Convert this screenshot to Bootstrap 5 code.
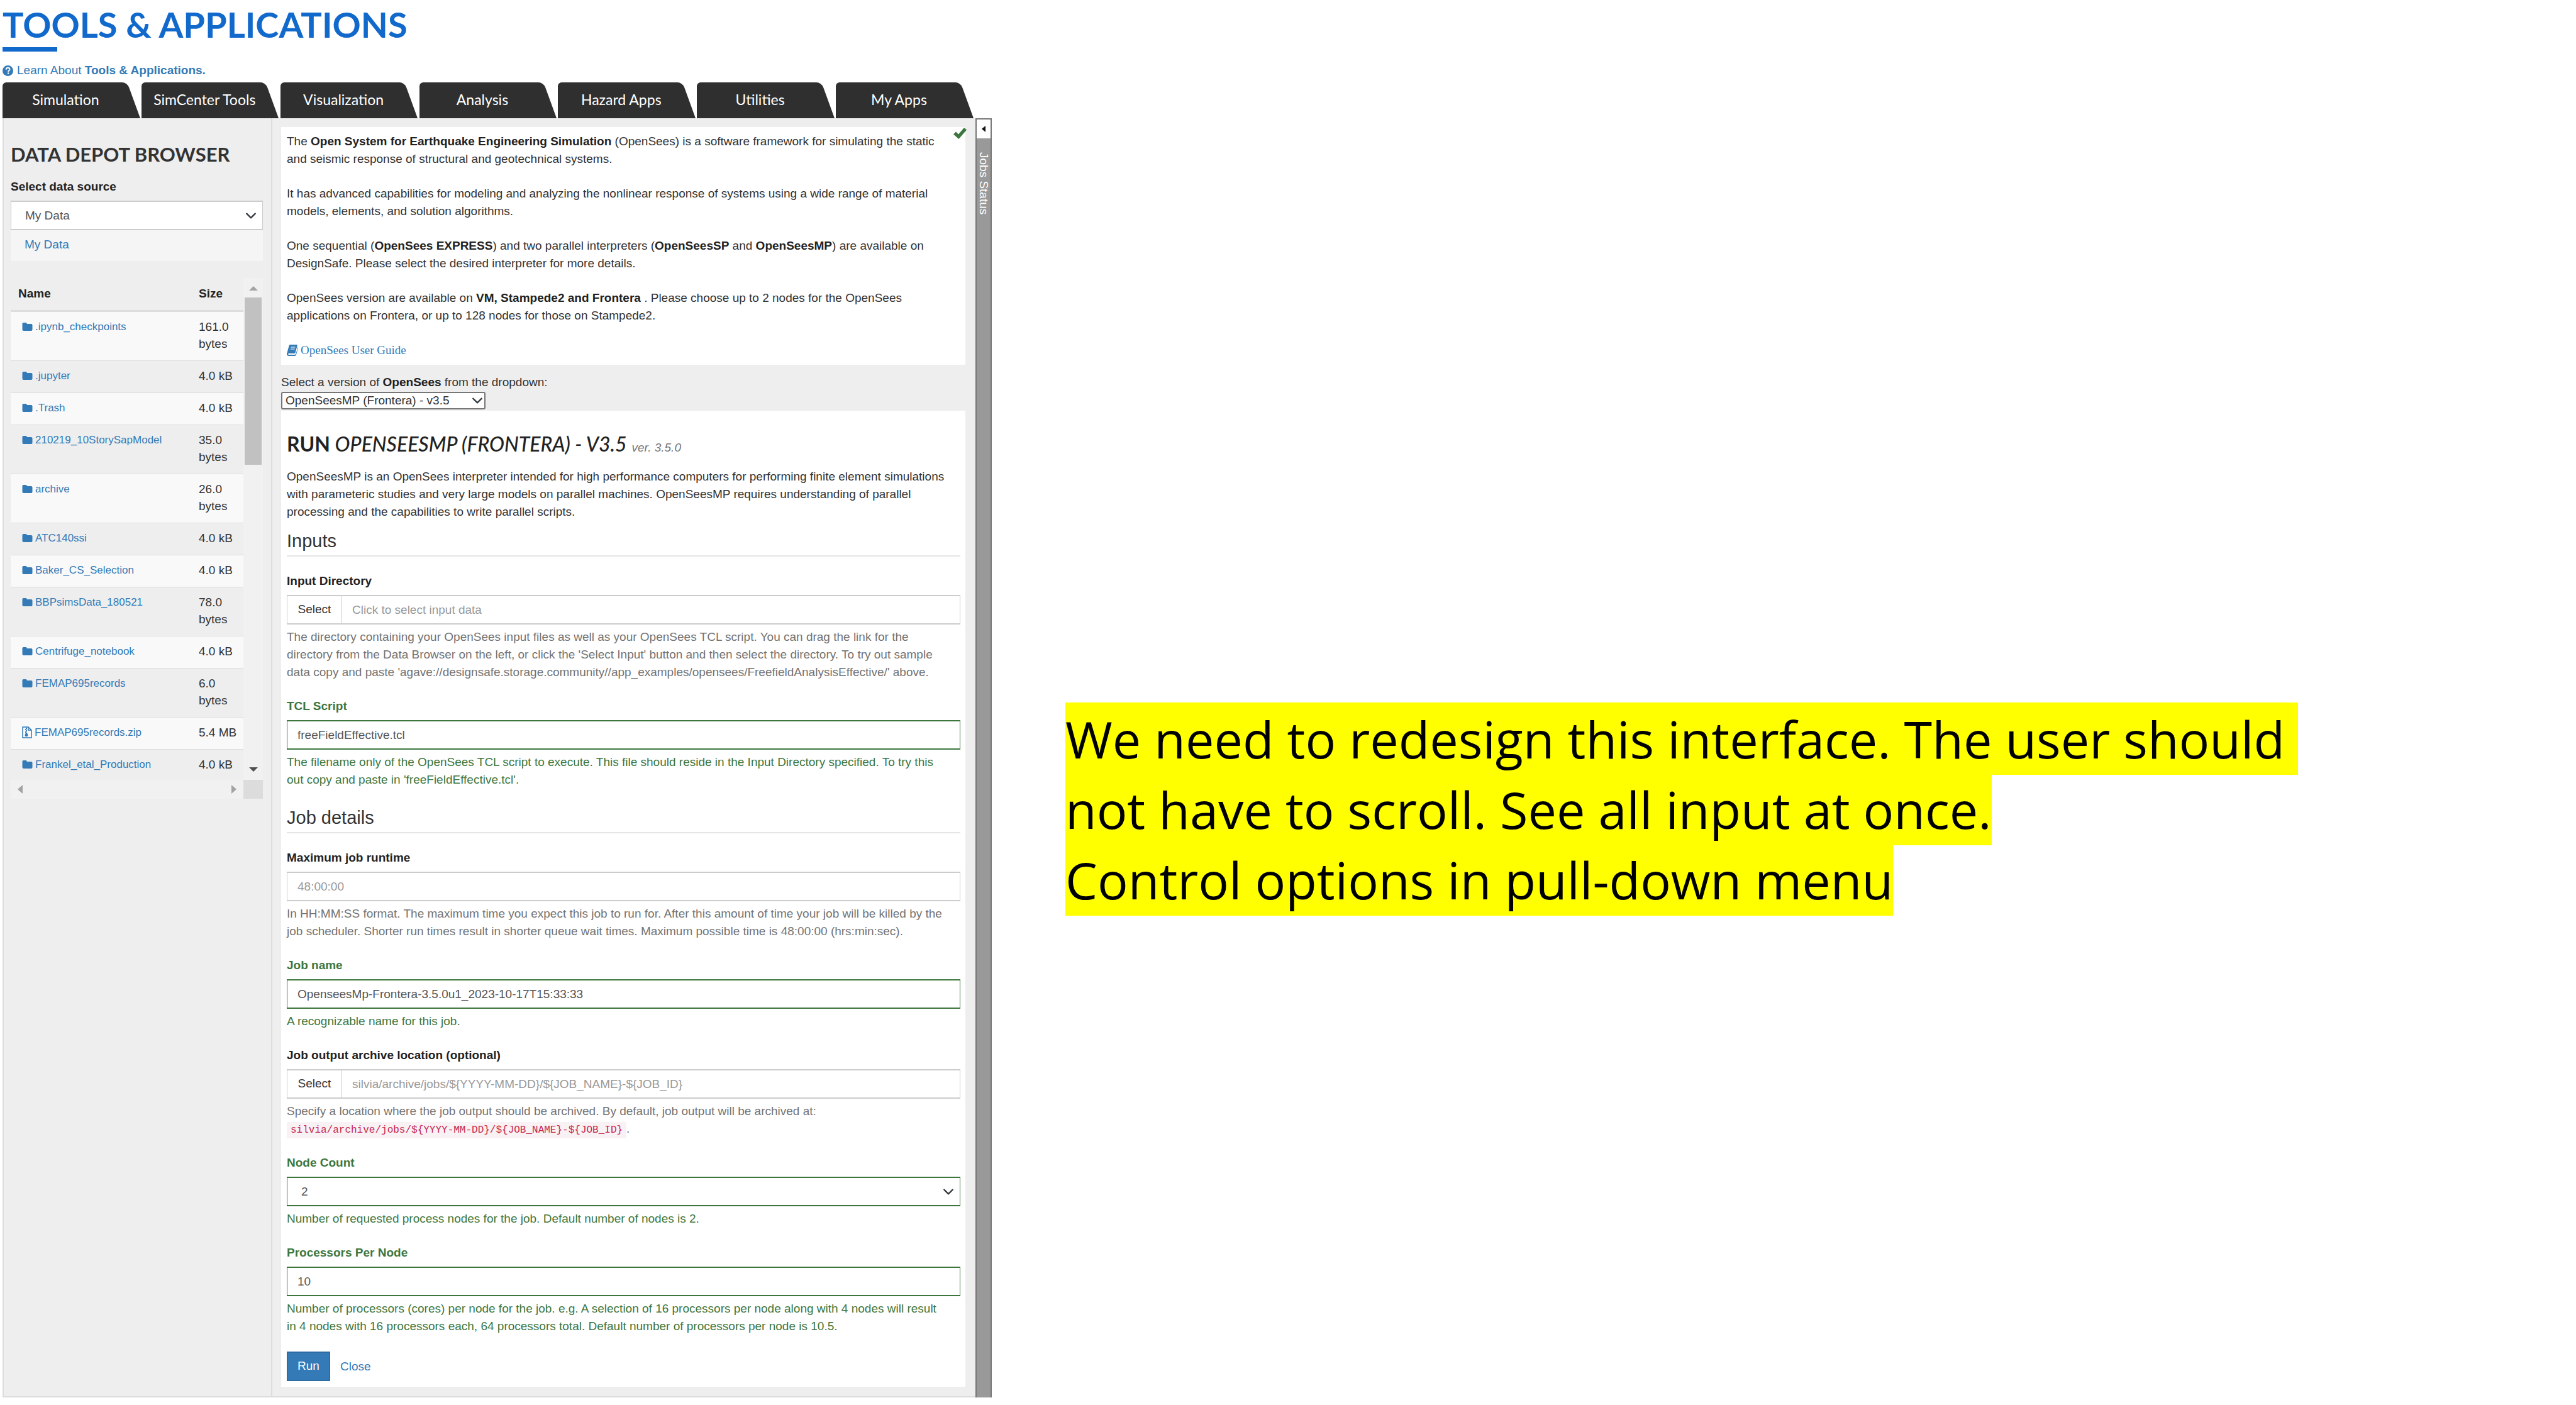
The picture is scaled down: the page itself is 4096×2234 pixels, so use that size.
<!DOCTYPE html>
<html lang="en">
<head>
<meta charset="utf-8">
<meta name="viewport" content="width=device-width, initial-scale=1">
<title>Tools &amp; Applications</title>
<link href="https://cdn.jsdelivr.net/npm/bootstrap@5.3.0/dist/css/bootstrap.min.css" rel="stylesheet">
<style>
  body { font-family: "Liberation Sans", Arial, sans-serif; font-size: 19px; line-height: 28px; color: #333; background: #fff; }
  a { color: #337ab7; text-decoration: none; }
  strong, label { font-weight: 700; }
  strong { color: #222; }
  a strong { color: inherit; }
  .app { width: 38.5%; }
  .display-face { font-family: Lato, sans-serif; font-weight: 700; }

  .page-title { font-size: 56px; line-height: 64px; color: #1169cc; margin: 7px 0 4px; }
  .title-bar { width: 87px; height: 7px; background: #1169cc; margin-bottom: 16px; }
  .learn { margin-bottom: 5px; gap: 6px; }

  .tool-tabs { gap: 2px; padding-right: 29px; }
  .tool-tab { flex: 1 1 0; height: 57px; position: relative; isolation: isolate; color: #fff; font-size: 23px; line-height: 28px; border: 0; background: none; padding: 0 18px 3px 0; white-space: nowrap; overflow: hidden; }
  .tool-tab::before, .tool-tab::after { content: ""; position: absolute; top: 0; bottom: 0; z-index: -1; background: #2f2f2f; }
  .tool-tab::before { left: 0; width: 60%; border-top-left-radius: 6px; }
  .tool-tab::after { right: 0; width: 60%; border-top-right-radius: 8px; transform: skewX(20deg); transform-origin: bottom right; }

  .workspace { background: #eee; border-left: 2px solid #ddd; border-bottom: 2px solid #ddd; }
  .depot { width: 427px; border-right: 2px solid #ddd; padding: 37px 13px 0 11px; }
  .depot-title { font-size: 31px; line-height: 40px; margin-bottom: 18px; }
  .field-label { display: block; margin-bottom: 8px; color: #222; }
  .field-box { height: 47px; border: solid #ccc; border-width: 2px 1px; border-radius: 0; font-size: 19px; line-height: 28px; color: #555; padding: 7px 16px; background-color: #fff; }
  .field-box::placeholder { color: #999; }
  .form-select.field-box { padding-left: 22px; background-position: right 9px center; background-size: 18px 18px; }
  .crumb { background: #f5f5f5; padding: 9px 22px 12px; margin-bottom: 27px; }

  .file-view { height: 798px; overflow: hidden; }
  .file-table { border-collapse: separate; border-spacing: 0; width: 100%; table-layout: fixed; }
  .file-table th { padding: 11px 12px 12px; border-bottom: 2px solid #ddd; color: #222; }
  .file-table td { padding: 10px 8px 13px 12px; border-top: 1px solid #ddd; line-height: 27px; vertical-align: top; }
  .file-table td:first-child { padding-left: 18px; font-size: 17px; }
  .file-table tbody tr:nth-child(odd) { background: #f9f9f9; }
  .size-col { width: 83px; }
  .file-ico { width: 17px; height: 13px; margin-right: 4px; vertical-align: -1px; }
  .zip-ico { width: 16px; height: 19px; margin-right: 4px; vertical-align: -4px; }
  .vbar { width: 31px; background: #f1f1f1; padding: 13px 0; }
  .vthumb { width: 27px; height: 266px; background: #c1c1c1; margin-top: 11px; }
  .hbar { height: 30px; background: #f1f1f1; padding: 0 11px; }
  .corner { width: 31px; height: 30px; background: #dcdcdc; }

  .tool-pane { padding: 14px 16px 15px 14px; min-width: 0; }
  .sheet { background: #fff; padding: 9px 8px 9px 9px; }
  .sheet p { margin-bottom: 27px; padding-right: 12px; }
  .run-form { padding-top: 31px; }
  .run-form p { margin-bottom: 12px; }
  .guide { font-family: "Liberation Serif", serif; }
  .ok-tick { position: absolute; right: -2px; top: 1px; }
  .version-line { margin-top: 14px; margin-bottom: 1px; font-weight: 400; }
  .version-pick { width: 325px; height: 28px; border: 2px solid #767676; border-radius: 3px; padding: 0 5px; font-size: 19px; line-height: 24px; color: #333; background-position: right 2px center; background-size: 18px 18px; margin-bottom: 2px; }
  .run-title { font-size: 32px; line-height: 44px; margin-bottom: 16px; color: #222; }
  .run-title em { font-weight: 500; }
  .run-title small { font-family: "Liberation Sans", sans-serif; font-size: 19px; line-height: 20px; font-weight: 400; font-style: italic; color: #777; }
  .part-title { font-size: 29px; line-height: 40px; font-weight: 400; color: #333; border-bottom: 2px solid #e5e5e5; padding-bottom: 3px; margin-bottom: 25px; }
  .help { color: #737373; margin-top: 6px; margin-bottom: 26px; padding-right: 20px; }
  .valid .field-label, .valid .help { color: #3c763d; }
  .valid .field-box { border-color: #3c763d; }
  .pick-btn { border: solid #ccc; border-width: 2px 0 2px 1px; background: #fff; color: #333; width: 87px; border-radius: 0; font-size: 19px; padding: 0; }
  .path-code { font-family: "Liberation Mono", monospace; font-size: 16px; line-height: 20px; color: #c7254e; background: #f9f2f4; padding: 4px 6px; }
  .run-btn { background: #337ab7; border: 2px solid #2e6da4; border-radius: 0; color: #fff; width: 69px; height: 47px; font-size: 19px; padding: 0; }
  .jobs { width: 26px; background: #999; border: 2px solid #777; border-width: 2px 2px 0; }
  .jobs button { height: 30px; width: 100%; background: #fff; border: 0; padding: 0; display: flex; align-items: center; justify-content: center; }
  .jobs span { writing-mode: vertical-rl; color: #fff; line-height: 22px; margin-top: 22px; }

  .note { padding: calc(50vh + 2px) 400px 0 117px; font-family: "Open Sans", sans-serif; font-size: 81px; line-height: 112px; color: #000; }
  .note mark { background: #ff0; color: #000; padding: 2px 0; }
</style>
<script src="https://cdn.jsdelivr.net/npm/bootstrap@5.3.0/dist/js/bootstrap.bundle.min.js"></script>
</head>
<body>
<div class="d-flex align-items-start">
  <div class="app flex-shrink-0">
    <header class="ps-1">
      <h1 class="page-title display-face">TOOLS &amp; APPLICATIONS</h1>
      <div class="title-bar"></div>
      <a href="#" class="learn d-flex align-items-center">
        <svg width="17" height="17" viewBox="0 0 16 16"><circle cx="8" cy="8" r="8" fill="#337ab7"/><path d="M5.300 6.200C5.400 4.400 6.600 3.600 8.100 3.600c1.500 0 2.700.9 2.700 2.300 0 1.900-2.200 1.900-2.200 3.500" fill="none" stroke="#fff" stroke-width="1.900"/><rect x="7.500" y="10.700" width="2.100" height="2.100" fill="#fff"/></svg>
        <span>Learn About <strong>Tools &amp; Applications.</strong></span>
      </a>
      <nav class="tool-tabs d-flex display-face">
        <button class="tool-tab">Simulation</button>
        <button class="tool-tab">SimCenter Tools</button>
        <button class="tool-tab">Visualization</button>
        <button class="tool-tab">Analysis</button>
        <button class="tool-tab">Hazard Apps</button>
        <button class="tool-tab">Utilities</button>
        <button class="tool-tab">My Apps</button>
      </nav>
    </header>

    <div class="d-flex">
      <main class="workspace d-flex flex-grow-1 ms-1">
        <aside class="depot flex-shrink-0">
          <h2 class="depot-title display-face">DATA DEPOT BROWSER</h2>
          <label class="field-label" for="source">Select data source</label>
          <select id="source" class="form-select field-box"><option>My Data</option></select>
          <div class="crumb"><a href="#">My Data</a></div>

          <div class="d-flex">
            <div class="file-view flex-grow-1">
              <table class="file-table">
                <thead><tr><th>Name</th><th class="size-col">Size</th></tr></thead>
                <tbody>
                  <tr><td><a href="#"><svg class="file-ico" viewBox="0 0 16 13"><use href="#folder"/></svg>.ipynb_checkpoints</a></td><td>161.0 bytes</td></tr>
                  <tr><td><a href="#"><svg class="file-ico" viewBox="0 0 16 13"><use href="#folder"/></svg>.jupyter</a></td><td>4.0 kB</td></tr>
                  <tr><td><a href="#"><svg class="file-ico" viewBox="0 0 16 13"><use href="#folder"/></svg>.Trash</a></td><td>4.0 kB</td></tr>
                  <tr><td><a href="#"><svg class="file-ico" viewBox="0 0 16 13"><use href="#folder"/></svg>210219_10StorySapModel</a></td><td>35.0 bytes</td></tr>
                  <tr><td><a href="#"><svg class="file-ico" viewBox="0 0 16 13"><use href="#folder"/></svg>archive</a></td><td>26.0 bytes</td></tr>
                  <tr><td><a href="#"><svg class="file-ico" viewBox="0 0 16 13"><use href="#folder"/></svg>ATC140ssi</a></td><td>4.0 kB</td></tr>
                  <tr><td><a href="#"><svg class="file-ico" viewBox="0 0 16 13"><use href="#folder"/></svg>Baker_CS_Selection</a></td><td>4.0 kB</td></tr>
                  <tr><td><a href="#"><svg class="file-ico" viewBox="0 0 16 13"><use href="#folder"/></svg>BBPsimsData_180521</a></td><td>78.0 bytes</td></tr>
                  <tr><td><a href="#"><svg class="file-ico" viewBox="0 0 16 13"><use href="#folder"/></svg>Centrifuge_notebook</a></td><td>4.0 kB</td></tr>
                  <tr><td><a href="#"><svg class="file-ico" viewBox="0 0 16 13"><use href="#folder"/></svg>FEMAP695records</a></td><td>6.0<br>bytes</td></tr>
                  <tr><td><a href="#"><svg class="zip-ico" viewBox="0 0 16 19"><path d="M1 1h9l5 5v12H1zM10 1v5h5" fill="none" stroke="#337ab7" stroke-width="1.500"/><path d="M6 2h2v2H6zM5 4h2v2H5zM6 6h2v2H6zM5 8h2v2H5zM6 10h2l1.500 4a2.500 2.300 0 1 1-5 0z" fill="#337ab7"/></svg>FEMAP695records.zip</a></td><td>5.4 MB</td></tr>
                  <tr><td><a href="#"><svg class="file-ico" viewBox="0 0 16 13"><use href="#folder"/></svg>Frankel_etal_Production</a></td><td>4.0 kB</td></tr>
                </tbody>
              </table>
            </div>
            <div class="vbar d-flex flex-column align-items-center flex-shrink-0" aria-hidden="true">
              <svg width="14" height="7" viewBox="0 0 14 7"><path d="M0 7 7 0l7 7z" fill="#a3a3a3"/></svg>
              <div class="vthumb"></div>
              <svg class="mt-auto" width="14" height="7" viewBox="0 0 14 7"><path d="M0 0h14L7 7z" fill="#505050"/></svg>
            </div>
          </div>
          <div class="d-flex" aria-hidden="true">
            <div class="hbar d-flex align-items-center justify-content-between flex-grow-1">
              <svg width="8" height="14" viewBox="0 0 8 14"><path d="M8 0v14L0 7z" fill="#a3a3a3"/></svg>
              <svg width="8" height="14" viewBox="0 0 8 14"><path d="M0 0v14l8-7z" fill="#a3a3a3"/></svg>
            </div>
            <div class="corner"></div>
          </div>
        </aside>

        <section class="tool-pane flex-grow-1">
          <div class="sheet position-relative">
            <svg class="ok-tick" width="21" height="18" viewBox="0 0 21 18"><path d="M0 10.500 4 6.500l4 4L17 0l4 3.500L8.500 18z" fill="#3c763d"/></svg>
            <p>The <strong>Open System for Earthquake Engineering Simulation</strong> (OpenSees) is a software framework for simulating the static and seismic response of structural and geotechnical systems.</p>
            <p>It has advanced capabilities for modeling and analyzing the nonlinear response of systems using a wide range of material models, elements, and solution algorithms.</p>
            <p>One sequential (<strong>OpenSees EXPRESS</strong>) and two parallel interpreters (<strong>OpenSeesSP</strong> and <strong>OpenSeesMP</strong>) are available on DesignSafe. Please select the desired interpreter for more details.</p>
            <p>OpenSees version are available on <strong>VM, Stampede2 and Frontera</strong> . Please choose up to 2 nodes for the OpenSees applications on Frontera, or up to 128 nodes for those on Stampede2.</p>
            <a href="#" class="guide d-flex align-items-center"><svg class="me-1" width="18" height="18" viewBox="0 0 18 18"><path d="M5 0h10.500c1 0 1.500.6 1.200 1.500L13.500 13c-.2.800-.8 1-1.500 1H3c-1 0-1.300 2 .2 2h9.500c1 0 1.600-.5 1.900-1.400L17.500 4c.6.400.6 1 .4 1.600L15 16c-.4 1.300-1.200 2-2.500 2H3c-2.200 0-3.400-2-2.800-4L3.500 2C3.800.8 4 0 5 0z" fill="#337ab7"/><path d="M6.500 4h7M5.800 7h7" stroke="#fff" stroke-width="1.200"/></svg>OpenSees User Guide</a>
          </div>
          <label class="version-line d-block" for="version">Select a version of <strong>OpenSees</strong> from the dropdown:</label>
          <select id="version" class="form-select version-pick"><option>OpenSeesMP (Frontera) - v3.5</option></select>

          <form class="sheet run-form">
            <h2 class="run-title display-face">RUN <em>OPENSEESMP (FRONTERA) - V3.5</em> <small>ver. 3.5.0</small></h2>
            <p>OpenSeesMP is an OpenSees interpreter intended for high performance computers for performing finite element simulations with parameteric studies and very large models on parallel machines. OpenSeesMP requires understanding of parallel processing and the capabilities to write parallel scripts.</p>

            <h3 class="part-title">Inputs</h3>
            <div>
              <label class="field-label" for="indir">Input Directory</label>
              <div class="d-flex"><button type="button" class="pick-btn btn flex-shrink-0">Select</button><input id="indir" class="form-control field-box" placeholder="Click to select input data"></div>
              <div class="help">The directory containing your OpenSees input files as well as your OpenSees TCL script. You can drag the link for the directory from the Data Browser on the left, or click the 'Select Input' button and then select the directory. To try out sample data copy and paste 'agave://designsafe.storage.community//app_examples/opensees/FreefieldAnalysisEffective/' above.</div>
            </div>
            <div class="valid">
              <label class="field-label" for="tcl">TCL Script</label>
              <input id="tcl" class="form-control field-box" value="freeFieldEffective.tcl">
              <div class="help">The filename only of the OpenSees TCL script to execute. This file should reside in the Input Directory specified. To try this out copy and paste in 'freeFieldEffective.tcl'.</div>
            </div>

            <h3 class="part-title">Job details</h3>
            <div>
              <label class="field-label" for="runtime">Maximum job runtime</label>
              <input id="runtime" class="form-control field-box" placeholder="48:00:00">
              <div class="help">In HH:MM:SS format. The maximum time you expect this job to run for. After this amount of time your job will be killed by the job scheduler. Shorter run times result in shorter queue wait times. Maximum possible time is 48:00:00 (hrs:min:sec).</div>
            </div>
            <div class="valid">
              <label class="field-label" for="jobname">Job name</label>
              <input id="jobname" class="form-control field-box" value="OpenseesMp-Frontera-3.5.0u1_2023-10-17T15:33:33">
              <div class="help">A recognizable name for this job.</div>
            </div>
            <div>
              <label class="field-label" for="outdir">Job output archive location (optional)</label>
              <div class="d-flex"><button type="button" class="pick-btn btn flex-shrink-0">Select</button><input id="outdir" class="form-control field-box" placeholder="silvia/archive/jobs/${YYYY-MM-DD}/${JOB_NAME}-${JOB_ID}"></div>
              <div class="help">Specify a location where the job output should be archived. By default, job output will be archived at: <code class="path-code">silvia/archive/jobs/${YYYY-MM-DD}/${JOB_NAME}-${JOB_ID}</code>.</div>
            </div>
            <div class="valid">
              <label class="field-label" for="nodes">Node Count</label>
              <select id="nodes" class="form-select field-box"><option>2</option></select>
              <div class="help">Number of requested process nodes for the job. Default number of nodes is 2.</div>
            </div>
            <div class="valid">
              <label class="field-label" for="procs">Processors Per Node</label>
              <input id="procs" class="form-control field-box" value="10">
              <div class="help">Number of processors (cores) per node for the job. e.g. A selection of 16 processors per node along with 4 nodes will result in 4 nodes with 16 processors each, 64 processors total. Default number of processors per node is 10.5.</div>
            </div>
            <div class="d-flex align-items-center gap-3">
              <button type="button" class="run-btn btn">Run</button>
              <a href="#">Close</a>
            </div>
          </form>
        </section>
      </main>
      <aside class="jobs flex-shrink-0">
        <button aria-label="Show jobs"><svg width="6" height="10" viewBox="0 0 6 10"><path d="M6 0v10L0 5z" fill="#111"/></svg></button>
        <span>Jobs Status</span>
      </aside>
    </div>
  </div>

  <div class="note flex-grow-1"><mark>We need to redesign this interface. The user should&nbsp;<br>not have to scroll. See all input at once.</mark><br><mark>Control options in pull-down menu</mark></div>
</div>
<svg width="0" height="0" class="position-absolute"><defs><path id="folder" d="M0 2C0 .9.7 0 1.800 0h3.700C6.600 0 7.300.8 7.300 2H14c1.200 0 2 .8 2 2v7c0 1.200-.8 2-2 2H2c-1.200 0-2-.8-2-2z" fill="#337ab7"/></defs></svg>
</body>
</html>
